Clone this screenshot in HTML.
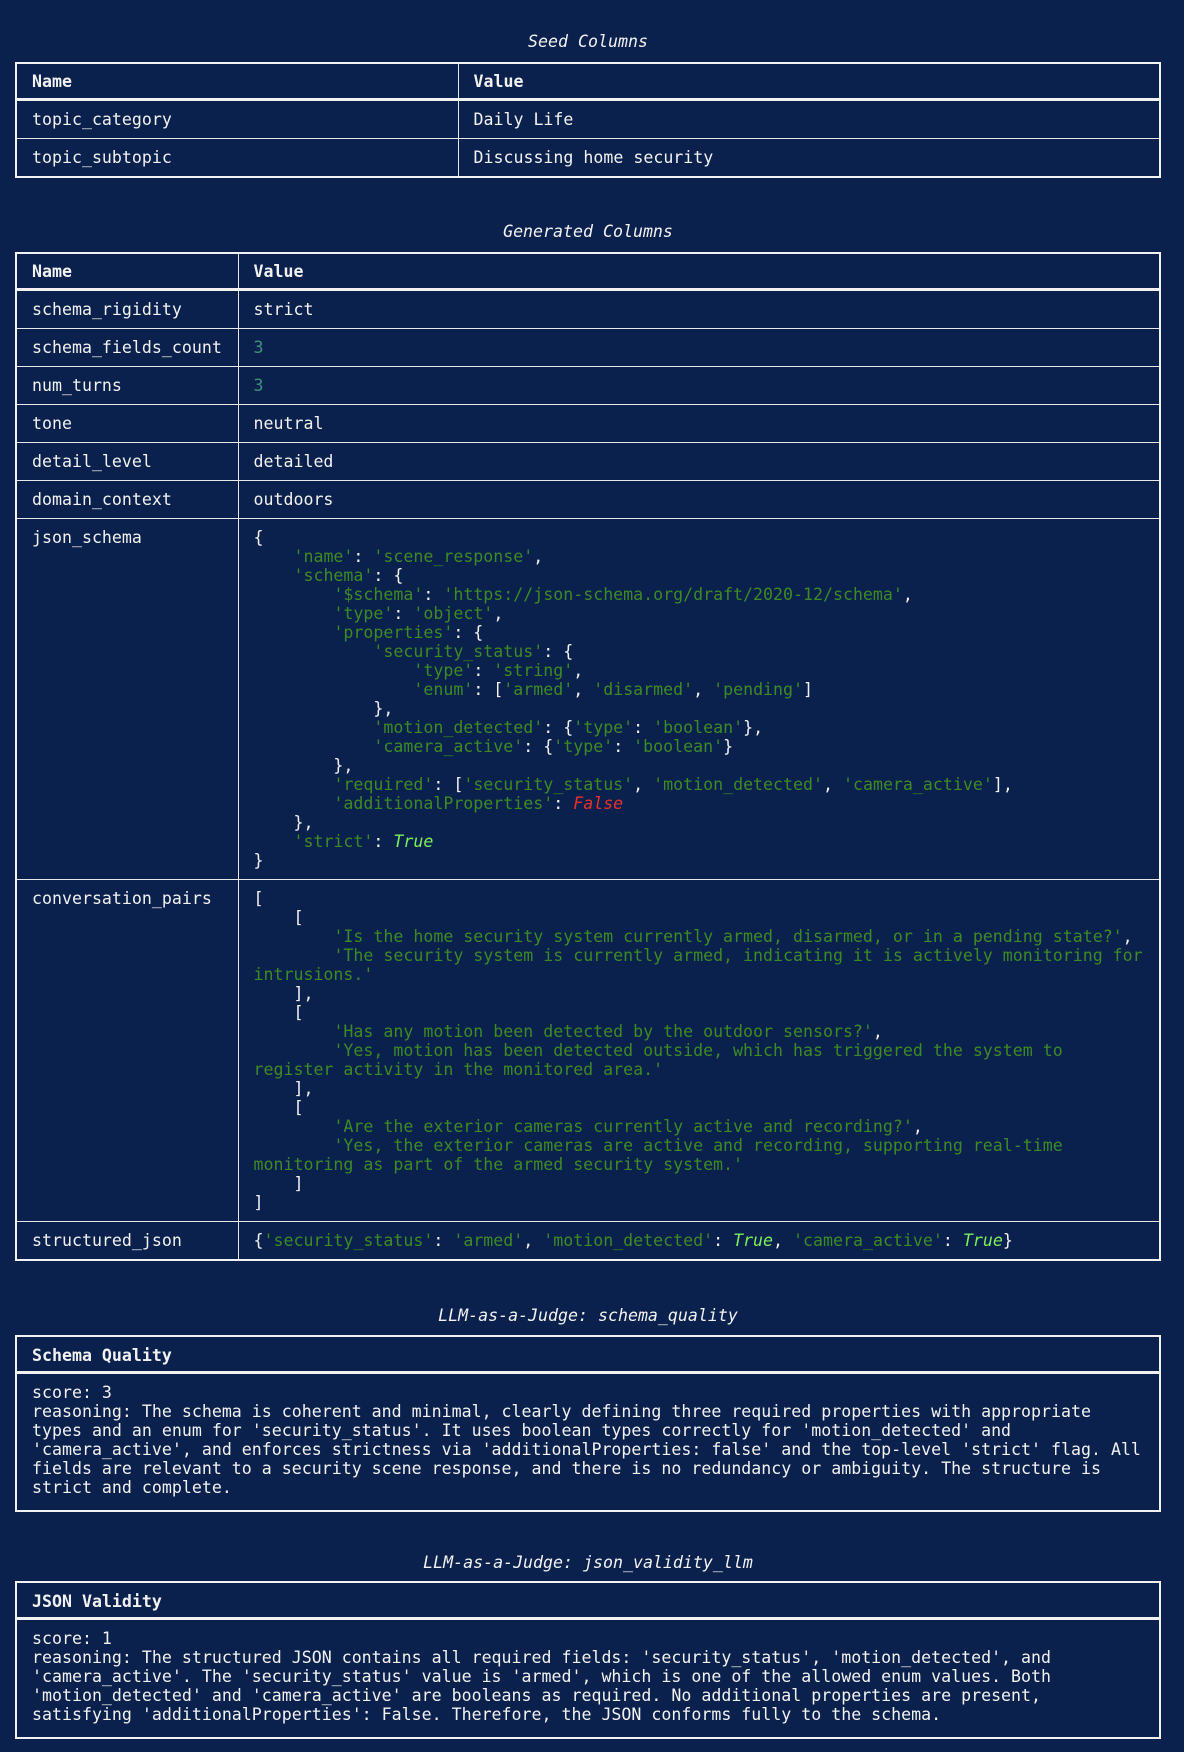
<!DOCTYPE html>
<html><head><meta charset="utf-8"><style>
*{margin:0;padding:0;box-sizing:border-box}
body{width:1184px;height:1752px;background:#0b214d;color:#f2f2f2;font-family:"DejaVu Sans Mono","Liberation Mono",monospace;font-size:16.6px;line-height:19px;position:relative;overflow:hidden}
.t{position:absolute;left:0;width:1176px;text-align:center;font-style:italic;height:19px}
table{position:absolute;left:15px;width:1146px;border-collapse:collapse;border:2px solid #f2f2f2}
td,th{border:1px solid #e8e8e8;padding:9px 15px 9px;text-align:left;vertical-align:top;white-space:pre}
th{font-weight:bold;border-bottom:3px solid #f2f2f2;padding:8px 15px 7px}
.s{color:#3d8a25}.n{color:#3f8f80}.tr{color:#7af05a;font-style:italic}.f{color:#e8302c;font-style:italic}
.box{position:absolute;left:15px;width:1146px;border:2px solid #f2f2f2}
.bh{font-weight:bold;padding:9px 15px 8px;border-bottom:3px solid #f2f2f2;height:37px}
.bb{padding:9px 15px 13px;white-space:pre}
</style></head><body>
<div class="t" style="top:32px">Seed Columns</div>
<table style="top:62px">
<tr><th style="width:442px">Name</th><th>Value</th></tr>
<tr><td>topic_category</td><td>Daily Life</td></tr>
<tr><td>topic_subtopic</td><td>Discussing home security</td></tr>
</table>
<div class="t" style="top:222px">Generated Columns</div>
<table style="top:252px">
<tr><th style="width:222px">Name</th><th>Value</th></tr>
<tr><td>schema_rigidity</td><td>strict</td></tr>
<tr><td>schema_fields_count</td><td><span class="n">3</span></td></tr>
<tr><td>num_turns</td><td><span class="n">3</span></td></tr>
<tr><td>tone</td><td>neutral</td></tr>
<tr><td>detail_level</td><td>detailed</td></tr>
<tr><td>domain_context</td><td>outdoors</td></tr>
<tr><td>json_schema</td><td>{
    <span class="s">'name'</span>: <span class="s">'scene_response'</span>,
    <span class="s">'schema'</span>: {
        <span class="s">'$schema'</span>: <span class="s">'https://json-schema.org/draft/2020-12/schema'</span>,
        <span class="s">'type'</span>: <span class="s">'object'</span>,
        <span class="s">'properties'</span>: {
            <span class="s">'security_status'</span>: {
                <span class="s">'type'</span>: <span class="s">'string'</span>,
                <span class="s">'enum'</span>: [<span class="s">'armed'</span>, <span class="s">'disarmed'</span>, <span class="s">'pending'</span>]
            },
            <span class="s">'motion_detected'</span>: {<span class="s">'type'</span>: <span class="s">'boolean'</span>},
            <span class="s">'camera_active'</span>: {<span class="s">'type'</span>: <span class="s">'boolean'</span>}
        },
        <span class="s">'required'</span>: [<span class="s">'security_status'</span>, <span class="s">'motion_detected'</span>, <span class="s">'camera_active'</span>],
        <span class="s">'additionalProperties'</span>: <span class="f">False</span>
    },
    <span class="s">'strict'</span>: <span class="tr">True</span>
}</td></tr>
<tr><td>conversation_pairs</td><td>[
    [
        <span class="s">'Is the home security system currently armed, disarmed, or in a pending state?'</span>,
        <span class="s">'The security system is currently armed, indicating it is actively monitoring for
intrusions.'</span>
    ],
    [
        <span class="s">'Has any motion been detected by the outdoor sensors?'</span>,
        <span class="s">'Yes, motion has been detected outside, which has triggered the system to
register activity in the monitored area.'</span>
    ],
    [
        <span class="s">'Are the exterior cameras currently active and recording?'</span>,
        <span class="s">'Yes, the exterior cameras are active and recording, supporting real-time
monitoring as part of the armed security system.'</span>
    ]
]</td></tr>
<tr><td>structured_json</td><td>{<span class="s">'security_status'</span>: <span class="s">'armed'</span>, <span class="s">'motion_detected'</span>: <span class="tr">True</span>, <span class="s">'camera_active'</span>: <span class="tr">True</span>}</td></tr>
</table>
<div class="t" style="top:1306px">LLM-as-a-Judge: schema_quality</div>
<div class="box" style="top:1335px">
<div class="bh">Schema Quality</div>
<div class="bb">score: 3
reasoning: The schema is coherent and minimal, clearly defining three required properties with appropriate
types and an enum for 'security_status'. It uses boolean types correctly for 'motion_detected' and
'camera_active', and enforces strictness via 'additionalProperties: false' and the top-level 'strict' flag. All
fields are relevant to a security scene response, and there is no redundancy or ambiguity. The structure is
strict and complete.</div>
</div>
<div class="t" style="top:1553px">LLM-as-a-Judge: json_validity_llm</div>
<div class="box" style="top:1581px">
<div class="bh">JSON Validity</div>
<div class="bb">score: 1
reasoning: The structured JSON contains all required fields: 'security_status', 'motion_detected', and
'camera_active'. The 'security_status' value is 'armed', which is one of the allowed enum values. Both
'motion_detected' and 'camera_active' are booleans as required. No additional properties are present,
satisfying 'additionalProperties': False. Therefore, the JSON conforms fully to the schema.</div>
</div>
</body></html>
